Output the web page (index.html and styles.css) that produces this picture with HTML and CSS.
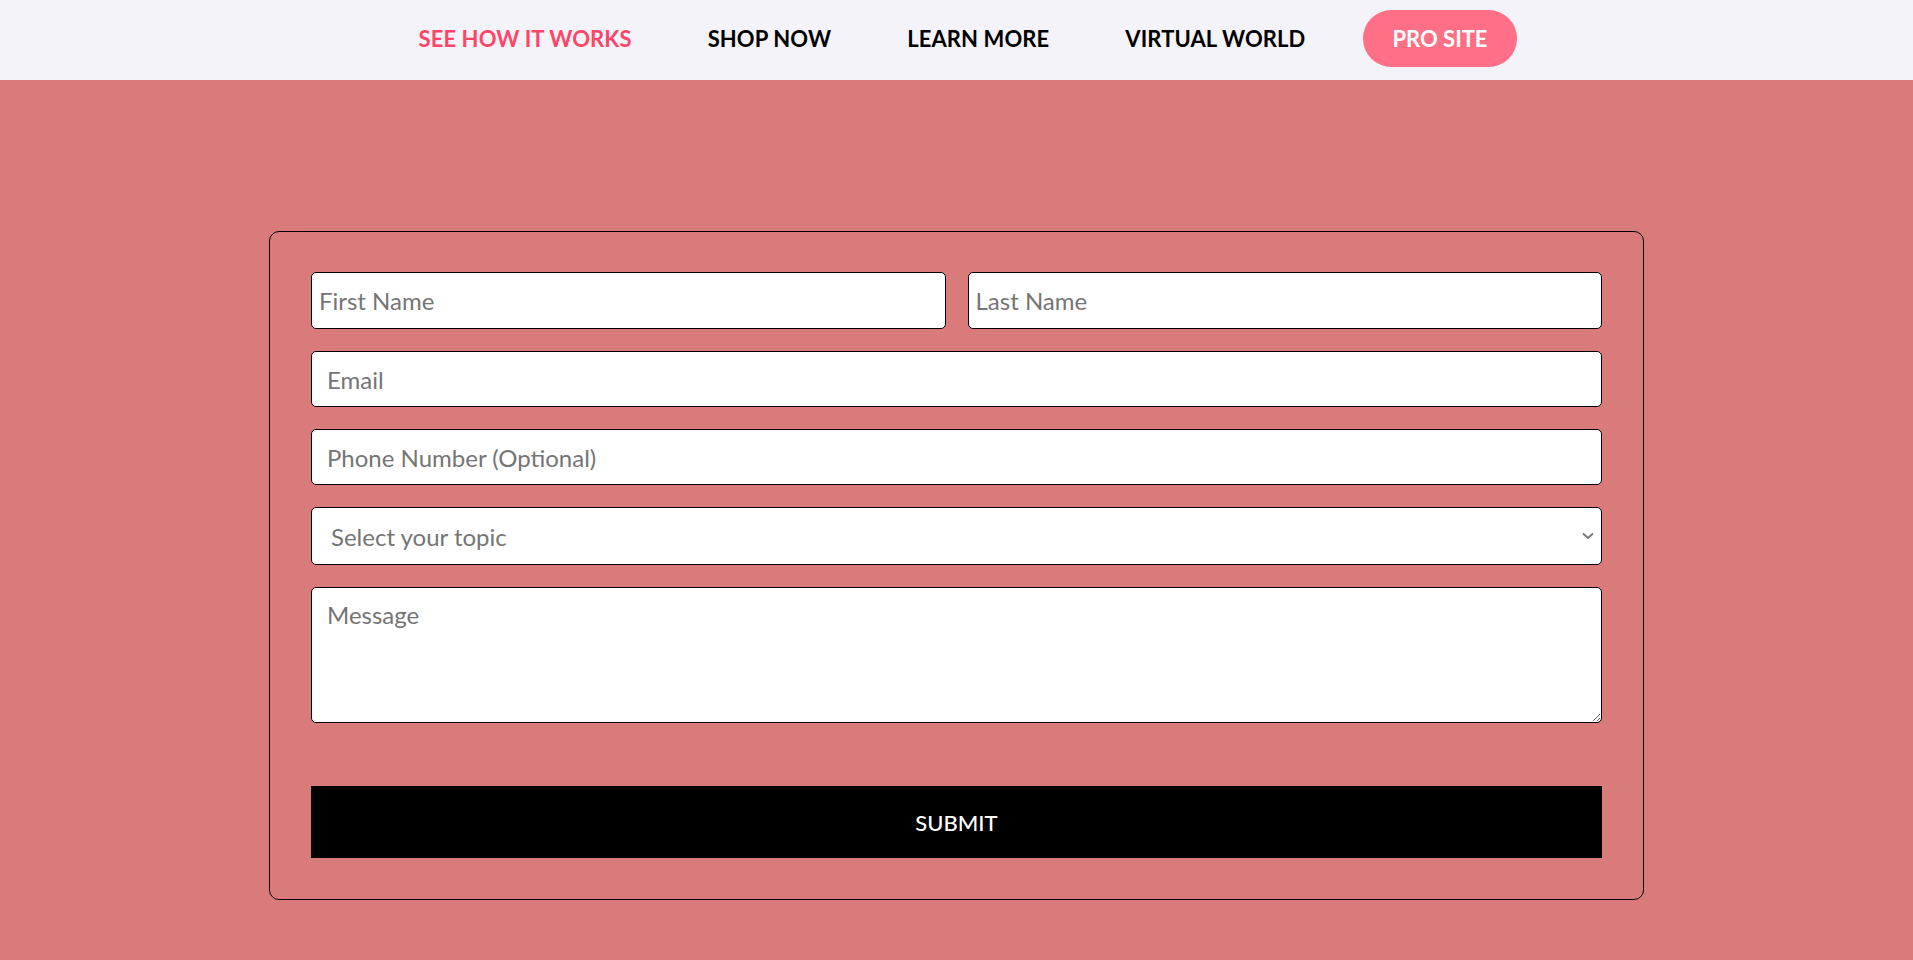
FILE: index.html
```html
<!DOCTYPE html>
<html lang="en">
<head>
<meta charset="utf-8">
<title>Contact</title>
<link rel="stylesheet" href="styles.css">
</head>
<body>
<nav class="topnav">
  <a class="navlink active" href="#">SEE HOW IT WORKS</a>
  <a class="navlink" href="#">SHOP NOW</a>
  <a class="navlink" href="#">LEARN MORE</a>
  <a class="navlink" href="#">VIRTUAL WORLD</a>
  <a class="pill" href="#">PRO SITE</a>
</nav>
<main class="main">
  <form class="card">
    <div class="row">
      <input class="field name" type="text" placeholder="First Name">
      <input class="field name" type="text" placeholder="Last Name">
    </div>
    <input class="field" type="email" placeholder="Email">
    <input class="field" type="tel" placeholder="Phone Number (Optional)">
    <div class="selectwrap">
      <select class="field select">
        <option>Select your topic</option>
      </select>
      <svg class="chev" width="12" height="8" viewBox="0 0 12 8"><path d="M1 1.5 L6 6 L11 1.5" fill="none" stroke="#777" stroke-width="1.8"/></svg>
    </div>
    <textarea class="field message" placeholder="Message"></textarea>
    <button class="submit" type="button">SUBMIT</button>
  </form>
</main>
</body>
</html>
```
FILE: styles.css
```css
* { box-sizing: border-box; }
html, body { margin: 0; padding: 0; }
body {
  background: #d97b7b;
  font-family: Lato, "Open Sans", sans-serif;
  min-height: 960px;
}
.topnav {
  height: 80px;
  background: #f4f3f9;
  display: flex;
  align-items: center;
  justify-content: center;
  gap: 76px;
  padding-left: 22px;
}
.navlink {
  color: #000;
  text-decoration: none;
  font-weight: 700;
  font-size: 22px;
  letter-spacing: 0.1px;
  margin-bottom: 3px;
}
.navlink.active { color: #ff4567; }
.pill {
  margin-left: -18px;
  background: #ff6f86;
  color: #fff;
  text-decoration: none;
  font-weight: 700;
  font-size: 22px;
  height: 57px;
  padding: 0 29px;
  border-radius: 29px;
  display: flex;
  align-items: center;
  margin-top: -3px;
}
.main {
  padding-top: 151px;
}
.card {
  width: 1375px;
  margin: 0 auto;
  border: 1px solid #000;
  border-radius: 10px;
  padding: 40px 41px 41px 41px;
  display: flex;
  flex-direction: column;
  gap: 22px;
}
.row {
  display: flex;
  gap: 22px;
}
.field {
  width: 100%;
  height: 56px;
  border: 1px solid #000;
  border-radius: 5px;
  background: #fff;
  font-family: Lato, "Open Sans", sans-serif;
  font-size: 24px;
  padding: 0 15px;
  color: #333;
  outline: none;
}
.field::placeholder { color: #757575; }
.name { flex: 1; height: 57px; padding: 0 7px; }
.selectwrap { position: relative; }
.select {
  appearance: none;
  -webkit-appearance: none;
  height: 58px;
  padding: 0 19px;
  color: #757575;
}
.chev {
  position: absolute;
  right: 8px;
  top: 25px;
}
.message {
  height: 136px;
  padding: 12px 15px;
  resize: vertical;
  display: block;
}
.submit {
  margin-top: 41px;
  height: 72px;
  background: #000;
  color: #fff;
  border: none;
  border-radius: 0;
  font-family: Lato, "Open Sans", sans-serif;
  font-size: 22px;
  font-weight: 500;
}
```
